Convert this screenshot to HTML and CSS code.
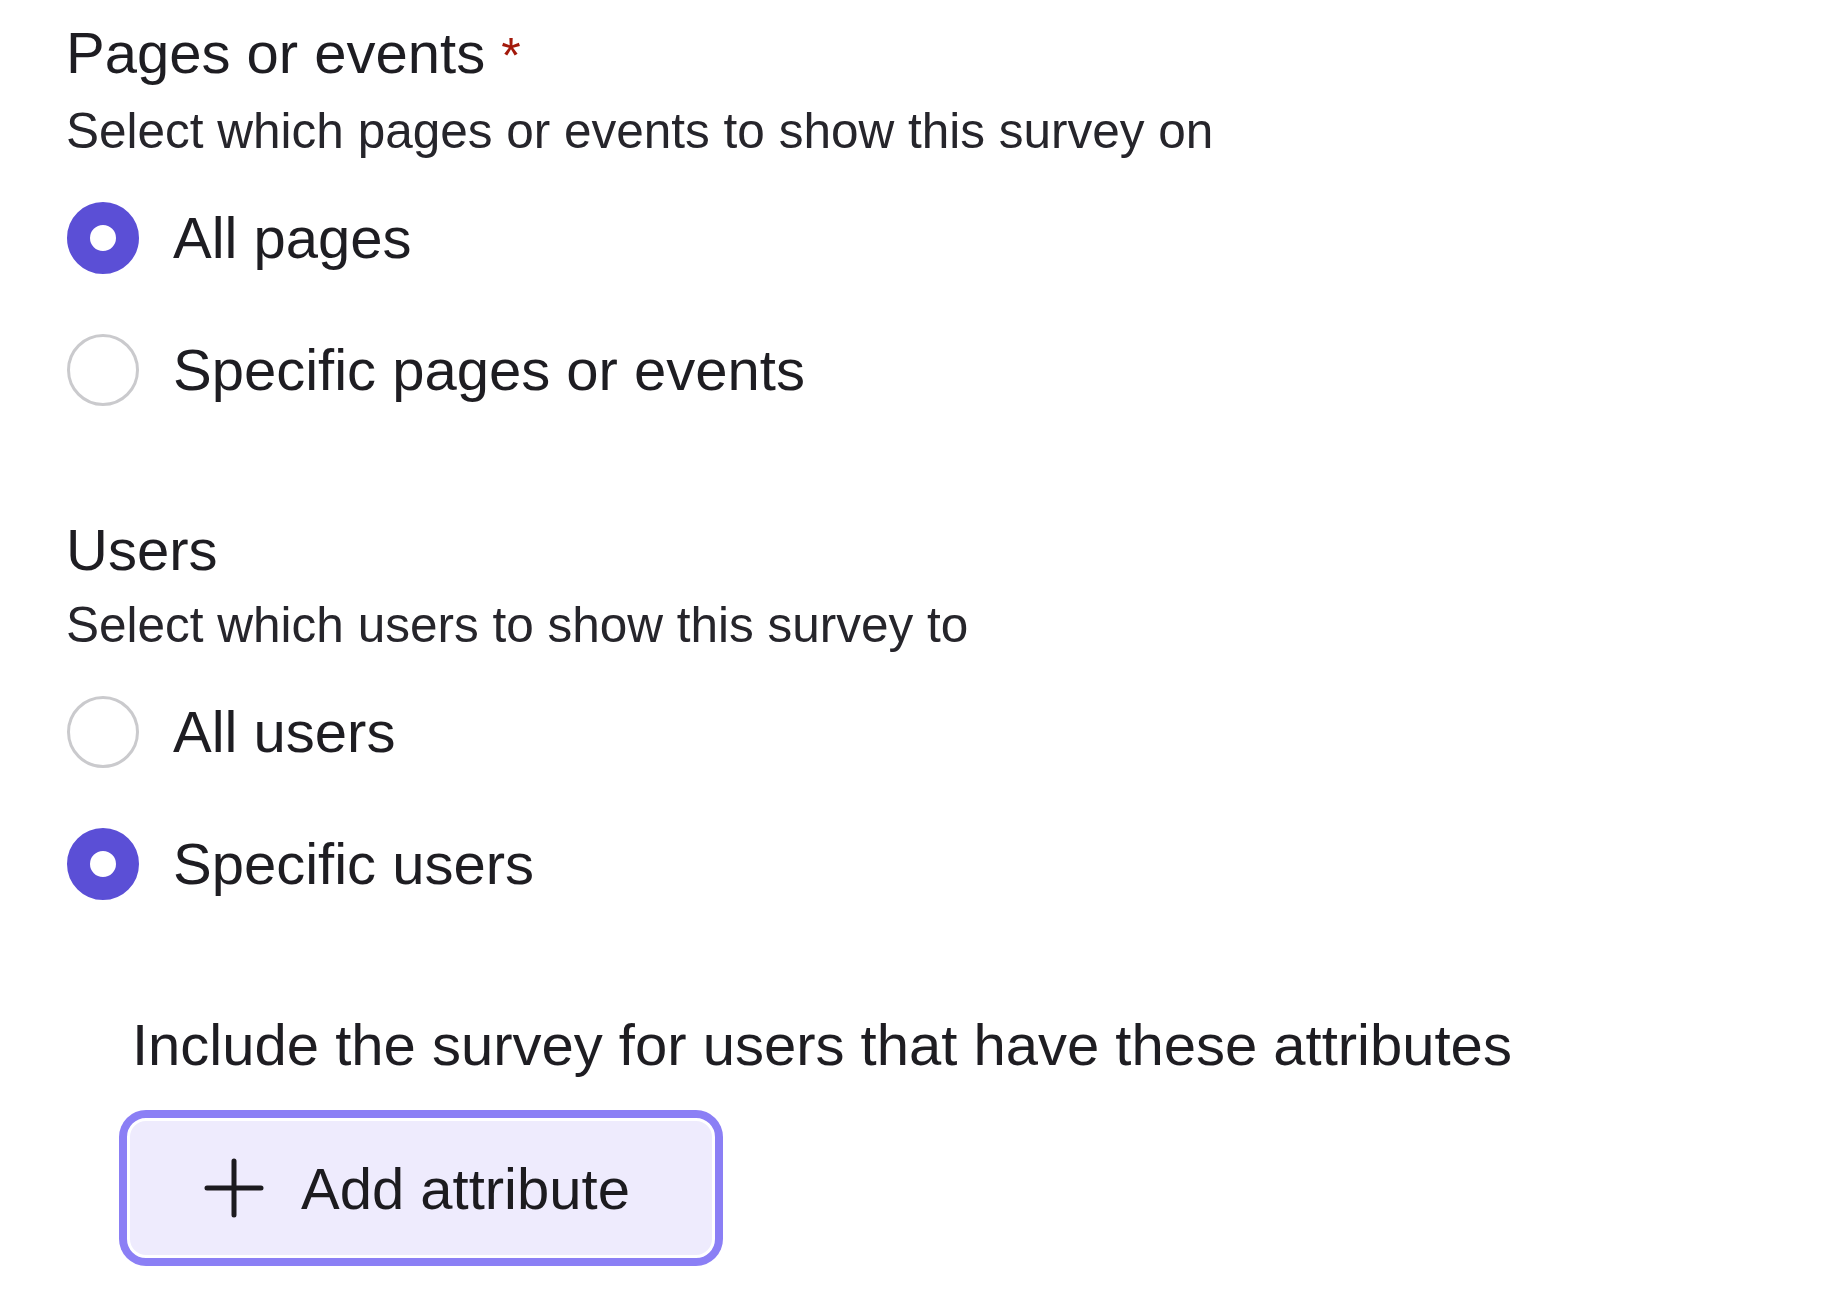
FILE: index.html
```html
<!DOCTYPE html>
<html lang="en">
<head>
    <meta charset="UTF-8">
    <meta name="viewport" content="width=device-width, initial-scale=1.0">
    <title>Survey targeting</title>
    <link rel="stylesheet" href="styles.css">
</head>
<body>
    <div class="form">
        <section class="field">
            <h2 class="field-title">Pages or events <span class="required">*</span></h2>
            <p class="field-help">Select which pages or events to show this survey on</p>
            <div class="options">
                <label class="option">
                    <input type="radio" name="pages" value="all" checked>
                    <span>All pages</span>
                </label>
                <label class="option">
                    <input type="radio" name="pages" value="specific">
                    <span>Specific pages or events</span>
                </label>
            </div>
        </section>

        <section class="field field-users">
            <h2 class="field-title">Users</h2>
            <p class="field-help">Select which users to show this survey to</p>
            <div class="options">
                <label class="option">
                    <input type="radio" name="users" value="all">
                    <span>All users</span>
                </label>
                <label class="option">
                    <input type="radio" name="users" value="specific" checked>
                    <span>Specific users</span>
                </label>
            </div>

            <div class="attributes">
                <p class="attributes-title">Include the survey for users that have these attributes</p>
                <button class="add-btn" type="button">
                    <svg class="plus" viewBox="0 0 60 60" aria-hidden="true">
                        <path d="M30 3v54M3 30h54" stroke="#1c1b1f" stroke-width="5" stroke-linecap="round" fill="none"/>
                    </svg>
                    Add attribute
                </button>
            </div>
        </section>
    </div>
</body>
</html>
```

FILE: styles.css
```css
body {
    margin: 0;
    background: #ffffff;
    font-family: "Liberation Sans", Arial, Helvetica, sans-serif;
    color: #1e1d22;
}

.form {
    padding: 13px 66px 28px 66px;
}

.field-title {
    margin: 0;
    font-size: 58px;
    font-weight: normal;
    line-height: 80px;
}

.required {
    font-size: 50px;
    color: #a3190b;
}

.field-help {
    margin: 0;
    font-size: 49.5px;
    line-height: 70px;
    color: #26252b;
}

.field-users {
    margin-top: 104px;
}

.options {
    display: flex;
    flex-direction: column;
    gap: 60px;
    margin-top: 36px;
}

.option {
    display: flex;
    align-items: center;
    gap: 34px;
    font-size: 58px;
    line-height: 72px;
    cursor: pointer;
}

.option input {
    appearance: none;
    -webkit-appearance: none;
    box-sizing: border-box;
    width: 72px;
    height: 72px;
    margin: 0 0 0 1px;
    border-radius: 50%;
    border: 3px solid #cacacd;
    background: #fff;
    flex-shrink: 0;
}

.option input:checked {
    border: 23px solid #5b4fd6;
}

.attributes {
    margin-top: 105px;
    padding-left: 61px;
}

.attributes-title {
    margin: 0;
    padding-left: 5px;
    font-size: 58px;
    line-height: 80px;
}

.add-btn {
    display: flex;
    align-items: center;
    gap: 37px;
    box-sizing: border-box;
    width: 588px;
    height: 140px;
    margin-top: 33px;
    padding: 0 0 0 74px;
    border: 3px solid #ffffff;
    border-radius: 19px;
    box-shadow: 0 0 0 8px #8b7ff5;
    background: #eeebfd;
    font-family: inherit;
    font-size: 58px;
    color: #1c1b1f;
    cursor: pointer;
}

.plus {
    width: 60px;
    height: 60px;
    flex-shrink: 0;
}
```
